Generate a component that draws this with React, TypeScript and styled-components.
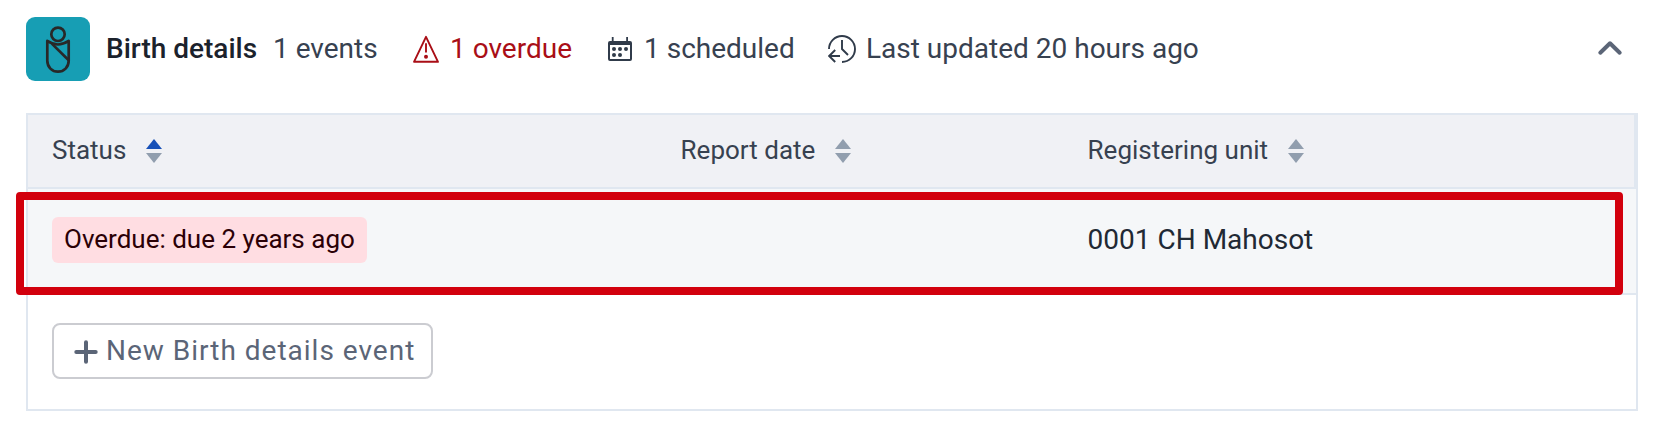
import React from "react";
import styled, { createGlobalStyle } from "styled-components";

const GlobalStyle = createGlobalStyle`
  * { box-sizing: border-box; }
  body {
    margin: 0;
    background: #fff;
    font-family: Roboto, "Liberation Sans", sans-serif;
    color: #212934;
  }
`;

const Widget = styled.section`
  position: relative;
  width: 1662px;
  height: 426px;
  padding: 17px 24px 15px 26px;
  background: #fff;
`;

const Header = styled.header`
  display: flex;
  align-items: center;
  height: 64px;
  font-size: 28px;
  line-height: 32px;
  white-space: nowrap;
`;

const StageIcon = styled.div`
  width: 64px;
  height: 64px;
  border-radius: 9px;
  background: #179eb4;
  svg { display: block; }
`;

const Title = styled.h2`
  margin: 0 0 0 16px;
  width: 151px;
  font: inherit;
  font-weight: 500;
  color: #1b222c;
`;

const Stat = styled.div<{ $gap: number; $width: number; $color?: string }>`
  display: flex;
  align-items: center;
  margin-left: ${(p) => p.$gap}px;
  width: ${(p) => p.$width}px;
  color: ${(p) => p.$color ?? "#374150"};
  svg { flex: none; margin-right: 10px; }
`;

const Collapse = styled.button`
  display: flex;
  margin: 0 12px 0 auto;
  padding: 0;
  border: 0;
  background: none;
`;

const Table = styled.div`
  margin-top: 32px;
  width: 1612px;
  height: 298px;
  border: 2px solid #e0e7f0;
`;

const Columns = styled.div`
  display: grid;
  grid-template-columns: 628.6px 407px 1fr;
  align-items: center;
  padding-left: 24px;
  border-bottom: 2px solid #e0e7f0;
`;

const HeadRow = styled(Columns)`
  height: 74px;
  border-right: 2px solid #e0e7f0;
  background: #f0f1f5;
  color: #374150;
  font-size: 26px;
  line-height: 32px;
`;

const BodyRow = styled(Columns)`
  height: 106px;
  padding-bottom: 2px;
  background: #f5f7f9;
  font-size: 28px;
  line-height: 32px;
`;

const HeadCell = styled.div`
  display: flex;
  align-items: center;
  gap: 19.5px;
  line-height: 30px;
  padding-bottom: 2px;
  svg { flex: none; margin-top: 2px; }
`;

const Tag = styled.span`
  display: inline-flex;
  align-items: center;
  height: 46px;
  width: 315px;
  padding: 0 12px 2px;
  border-radius: 6px;
  background: #ffdde2;
  color: #2b0006;
  font-size: 26px;
  white-space: nowrap;
  vertical-align: top;
`;

const Footer = styled.div`
  padding: 28px 24px;
`;

const NewButton = styled.button`
  display: flex;
  align-items: center;
  gap: 8px;
  width: 381px;
  height: 56px;
  padding: 0 0 0 20px;
  border: 2px solid #cbccd1;
  border-radius: 8px;
  background: #fff;
  color: #5b6577;
  font: 400 28px/32px Roboto, "Liberation Sans", sans-serif;
  letter-spacing: 1px;
  white-space: nowrap;
  svg { flex: none; margin-top: 2px; }
`;

const Highlight = styled.div`
  position: absolute;
  left: 16px;
  top: 192px;
  width: 1607.4px;
  height: 102.6px;
  border: 8px solid #d2000d;
  border-radius: 4px;
  pointer-events: none;
`;

const BabyIcon = () => (
  <svg width="64" height="64" viewBox="0 0 64 64" fill="none" stroke="#282828" strokeWidth="2.7" strokeLinejoin="round">
    <circle cx="32" cy="17.3" r="6.7" />
    <path d="M21.3 23.9 C24.6 26 28 27.5 32 27.5 C36 27.5 39.4 26 42.7 23.9 V43.8 C42.7 50 38 54.7 32 54.7 C26 54.7 21.3 50 21.3 43.8 Z" />
    <path d="M25.8 26.6 L42.7 43.2" />
  </svg>
);

const WarningIcon = () => (
  <svg width="28" height="28" viewBox="0 0 28 28" fill="none" stroke="#a90e16" strokeWidth="1.9" strokeLinejoin="round">
    <path d="M14 1.8 L26 26.8 H2 Z" />
    <path d="M14 8.3 V17.6" />
    <circle cx="14" cy="21.8" r="2" fill="#a90e16" stroke="none" />
  </svg>
);

const CalendarIcon = () => (
  <svg width="28" height="28" viewBox="0 0 28 28" fill="#303b4a">
    <path fillRule="evenodd" d="M4 6 H5.8 V2 H7.6 V6 H20.2 V2 H22 V6 H24 Q26 6 26 8 V24 Q26 26 24 26 H4 Q2 26 2 24 V8 Q2 6 4 6 Z M4 10 V24 H24 V10 Z" />
    {[[8, 14], [14, 14], [20, 14], [8, 20], [14, 20]].map(([x, y]) => (
      <circle key={`${x}-${y}`} cx={x} cy={y} r="2" />
    ))}
  </svg>
);

const HistoryIcon = () => (
  <svg width="28" height="28" viewBox="0 0 28 28" fill="none" stroke="#303b4a" strokeWidth="1.9">
    <path d="M1 14 A13 13 0 1 1 14 27" />
    <path d="M14 5 V14 L20 20" />
    <path d="M12 21 H1.5 M7.2 15 L1.2 21 L7.2 27" />
  </svg>
);

const ChevronUp = () => (
  <svg width="32" height="32" viewBox="0 0 32 32" fill="none" stroke="#5b6577" strokeWidth="4" strokeLinecap="round" strokeLinejoin="round">
    <path d="M6.3 19.7 L16 10.3 L25.7 19.7" />
  </svg>
);

const PlusIcon = () => (
  <svg width="24" height="24" viewBox="0 0 24 24" stroke="#5b6577" strokeWidth="4" strokeLinecap="round">
    <path d="M12 2.3 V21.7 M2.3 12 H21.7" />
  </svg>
);

const SortIcon = ({ ascending = false }: { ascending?: boolean }) => (
  <svg width="16" height="24" viewBox="0 0 16 24" fill="#919eae">
    <path d="M8 0 L16 10 H0 Z" fill={ascending ? "#1851b8" : "#919eae"} />
    <path d="M0 14 H16 L8 24 Z" />
  </svg>
);

export default function App() {
  return (
    <>
      <GlobalStyle />
      <Widget>
        <Header>
          <StageIcon><BabyIcon /></StageIcon>
          <Title>Birth details</Title>
          <Stat $gap={16} $width={105}>1 events</Stat>
          <Stat $gap={34} $width={160} $color="#a90e16"><WarningIcon />1 overdue</Stat>
          <Stat $gap={34} $width={188}><CalendarIcon />1 scheduled</Stat>
          <Stat $gap={34} $width={374}><HistoryIcon />Last updated 20 hours ago</Stat>
          <Collapse aria-label="Collapse"><ChevronUp /></Collapse>
        </Header>
        <Table>
          <HeadRow>
            <HeadCell>Status<SortIcon ascending /></HeadCell>
            <HeadCell>Report date<SortIcon /></HeadCell>
            <HeadCell>Registering unit<SortIcon /></HeadCell>
          </HeadRow>
          <BodyRow>
            <div><Tag>Overdue: due 2 years ago</Tag></div>
            <div />
            <div>0001 CH Mahosot</div>
          </BodyRow>
          <Footer>
            <NewButton><PlusIcon />New Birth details event</NewButton>
          </Footer>
        </Table>
        <Highlight />
      </Widget>
    </>
  );
}
